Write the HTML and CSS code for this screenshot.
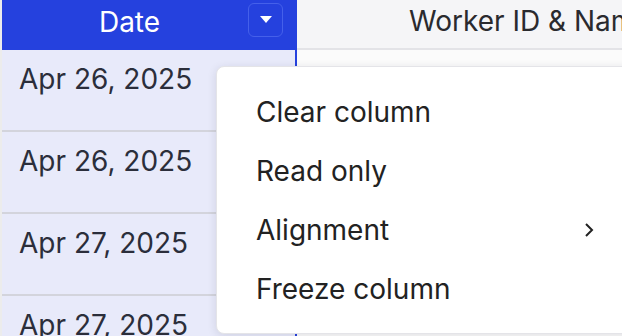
FILE: index.html
```html
<!DOCTYPE html>
<html lang="en">
<head>
  <meta charset="UTF-8" />
  <title>Grid column menu</title>
  <link rel="stylesheet" href="styles.css">
</head>
<body>
  <div class="grid">
    <div class="head">
      <div class="th th-date">
        <span>Date</span>
        <button class="col-btn" aria-label="Column menu">
          <svg width="12" height="8" viewBox="0 0 12 8"><path d="M0 0h12L6 7z" fill="#fff"/></svg>
        </button>
      </div>
      <div class="th th-worker">Worker ID &amp; Name</div>
    </div>
    <div class="row">
      <div class="td td-date">Apr 26, 2025</div>
      <div class="td td-rest"></div>
    </div>
    <div class="row">
      <div class="td td-date">Apr 26, 2025</div>
      <div class="td td-rest"></div>
    </div>
    <div class="row">
      <div class="td td-date">Apr 27, 2025</div>
      <div class="td td-rest"></div>
    </div>
    <div class="row">
      <div class="td td-date">Apr 27, 2025</div>
      <div class="td td-rest"></div>
    </div>
  </div>

  <ul class="menu">
    <li>Clear column</li>
    <li>Read only</li>
    <li>Alignment
      <svg class="chev" width="10" height="16" viewBox="0 0 10 16"><path d="M2 2l6 6-6 6" fill="none" stroke="#222" stroke-width="2"/></svg>
    </li>
    <li>Freeze column</li>
  </ul>
</body>
</html>
```

FILE: styles.css
```css
* { box-sizing: border-box; }
html, body {
  margin: 0;
  padding: 0;
  height: 100vh;
  overflow: hidden;
  font-family: Inter, "Noto Sans", sans-serif;
}
body {
  background: #ececec;
  padding-left: 2px;
}
.grid {
  background: #fbfbfb;
}
.head, .row {
  display: flex;
}
.th {
  height: 50px;
  font-size: 28px;
  display: flex;
  align-items: center;
  padding-bottom: 7px;
}
.th-date {
  width: 295px;
  flex: none;
  background: #2541de;
  color: #fff;
  justify-content: center;
  position: relative;
  padding-right: 40px;
}
.col-btn {
  position: absolute;
  right: 14px;
  top: 3px;
  width: 35px;
  height: 34px;
  border: 1.5px solid #4560ea;
  border-radius: 6px;
  background: transparent;
  display: flex;
  align-items: center;
  justify-content: center;
  padding: 0;
}
.th-worker {
  flex: 1;
  background: #f5f5f7;
  color: #2a2a2e;
  border-bottom: 2px solid #e3e3e7;
  padding-left: 112px;
  white-space: nowrap;
  overflow: hidden;
}
.td {
  height: 82px;
  font-size: 28px;
}
.td-date {
  width: 295px;
  flex: none;
  background: #e8eafa;
  color: #2b2e3b;
  border-right: 2px solid #2541de;
  border-bottom: 2px solid #d3d4dc;
  padding: 12px 0 0 17px;
  white-space: nowrap;
}
.td-rest {
  flex: 1;
  border-bottom: 2px solid #e6e6ea;
}
.menu {
  position: absolute;
  left: 216px;
  top: 66px;
  width: 420px;
  height: 268px;
  margin: 0;
  padding: 15px 0 0;
  list-style: none;
  background: #fff;
  border: 1px solid #e4e4e8;
  border-radius: 8px;
  box-shadow: 0 2px 10px rgba(30, 30, 60, 0.12);
}
.menu li {
  height: 59px;
  display: flex;
  align-items: center;
  padding: 0 41px 0 39px;
  font-size: 28px;
  color: #222;
}
.chev {
  margin-left: auto;
}
```
